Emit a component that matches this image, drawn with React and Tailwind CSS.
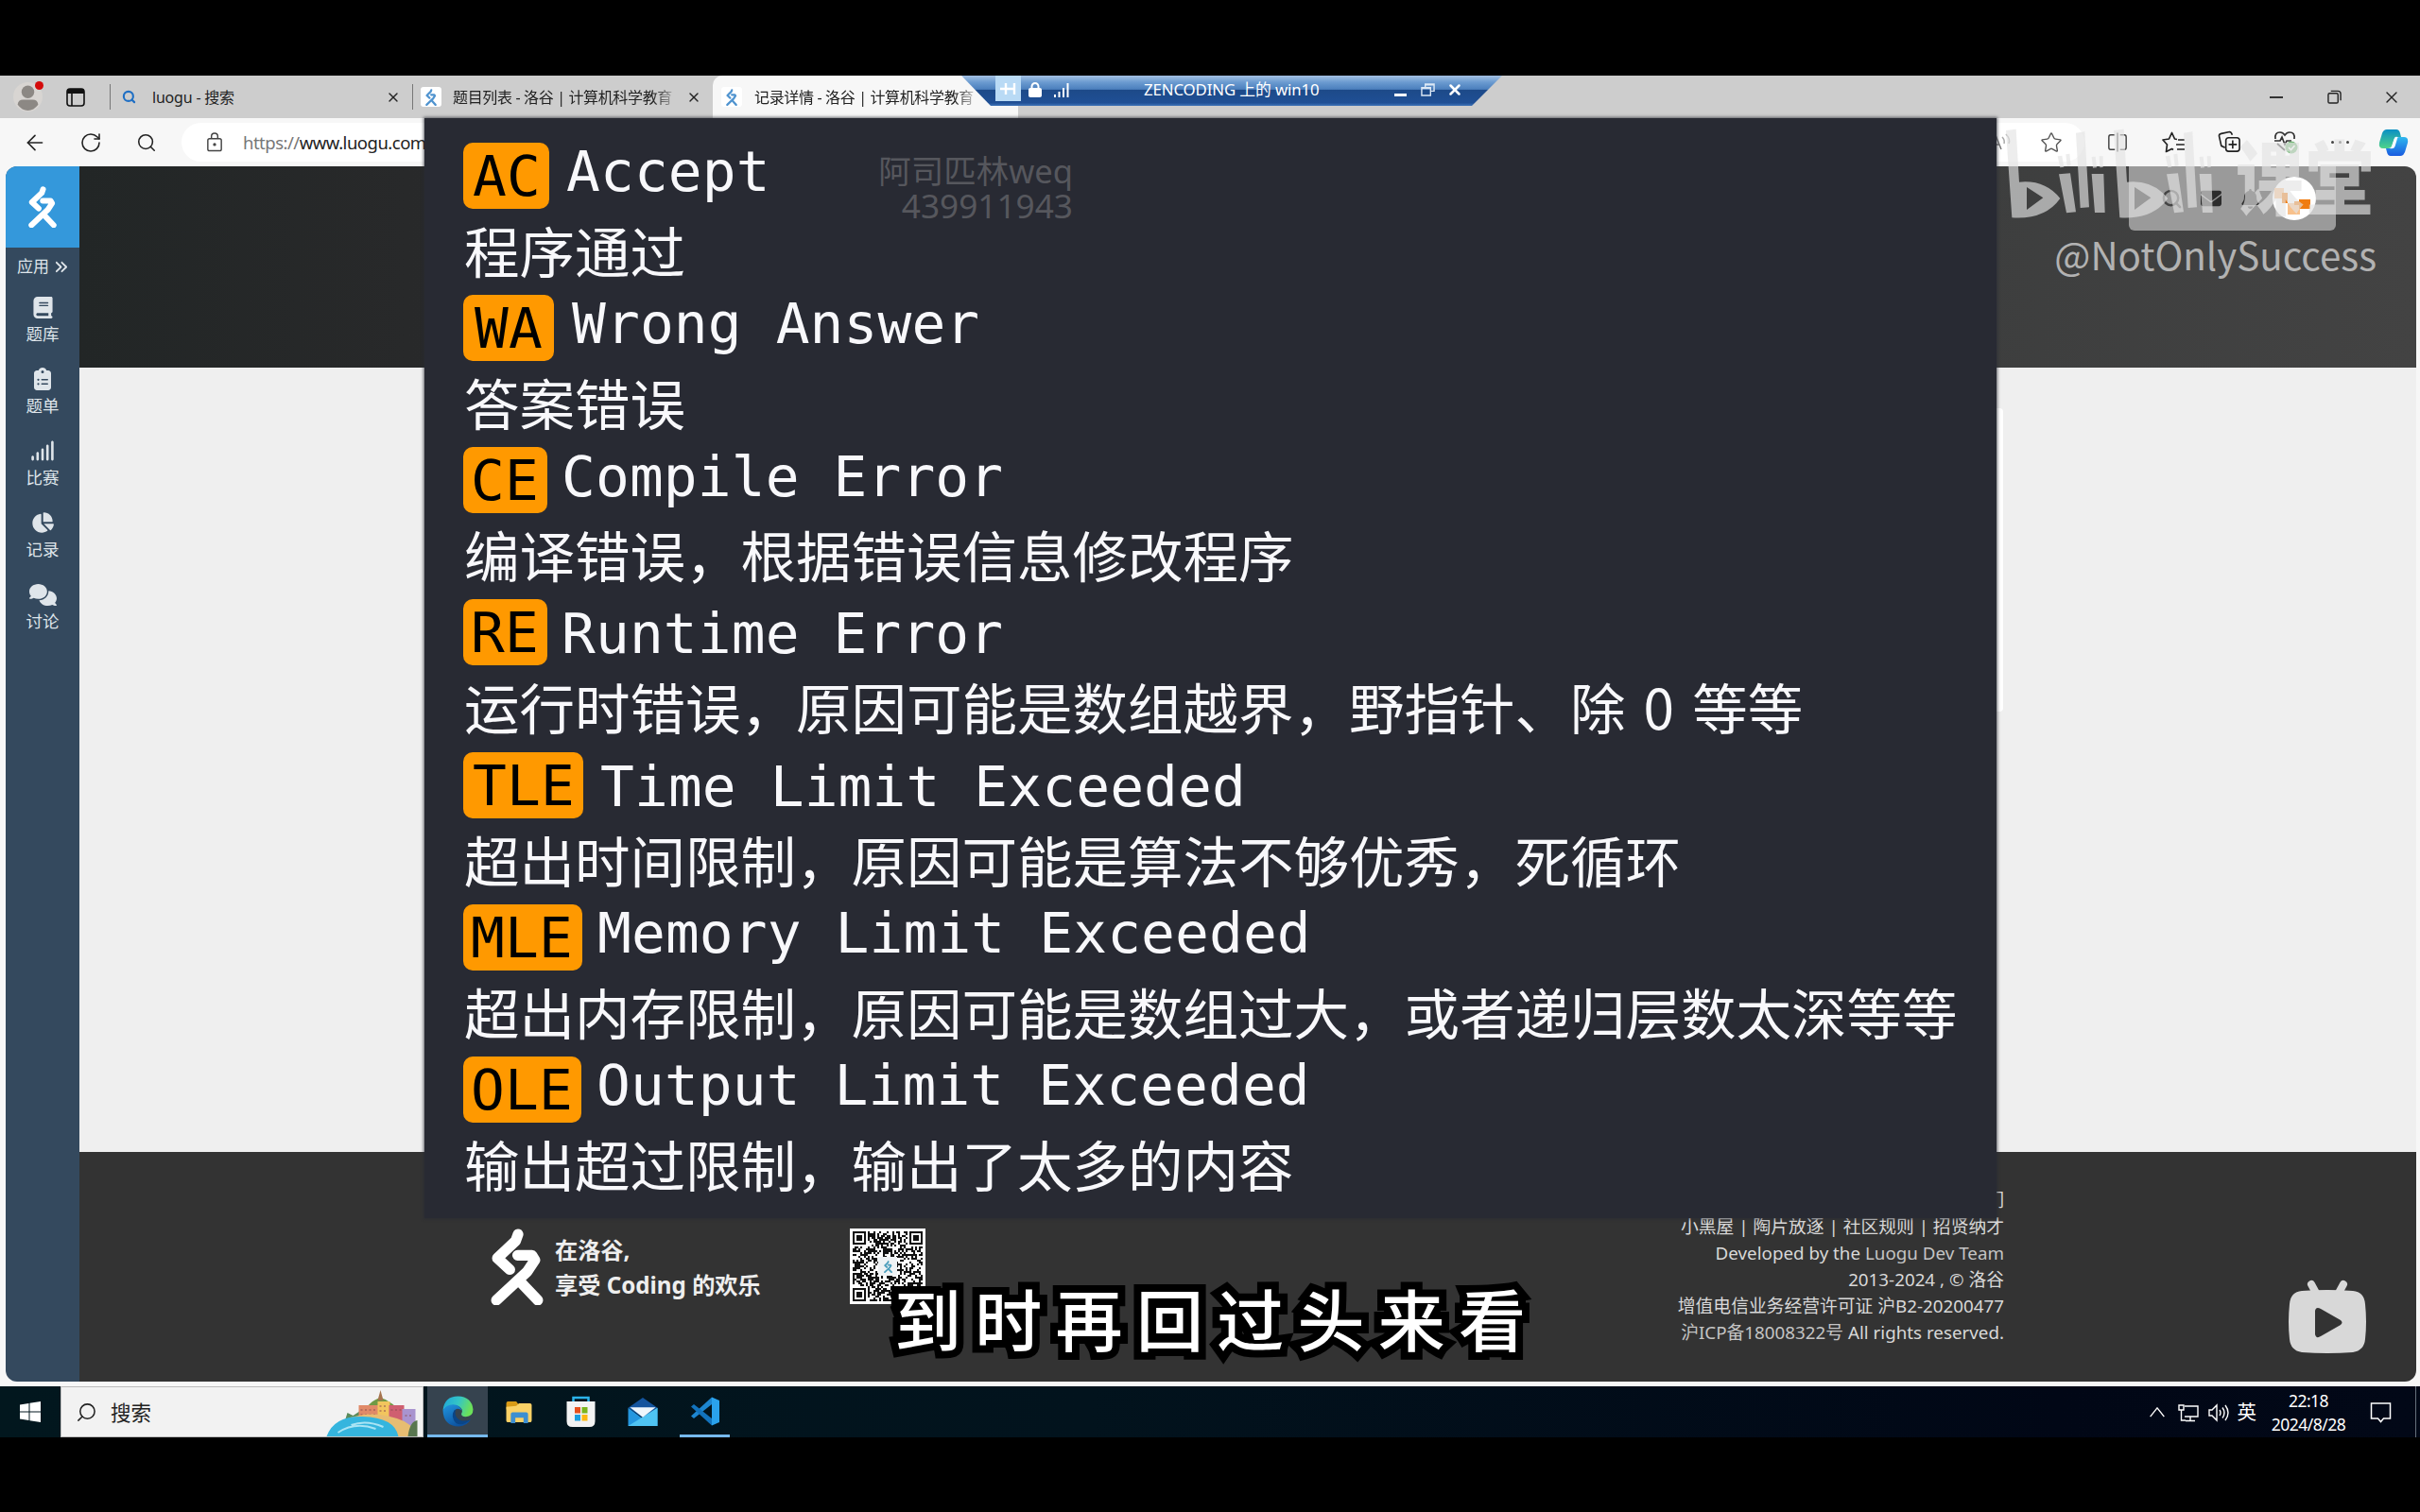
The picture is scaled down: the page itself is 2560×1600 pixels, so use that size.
import React from "react";
import { FaBook, FaClipboardList, FaSignal, FaChartPie, FaComments, FaBell, FaEnvelope, FaAnglesRight, FaLock } from "react-icons/fa6";
import { Search, Star, X, ArrowLeft, RotateCw } from "lucide-react";

const entries = [
  { code: "AC", title: "Accept", desc: "程序通过", badge: "w-[91px] pl-[10px]", head: "ml-[18px] -mt-[4px]" },
  { code: "WA", title: "Wrong Answer", desc: "答案错误", badge: "w-[96px] pl-[12px]", head: "ml-[19px] -mt-[4px]" },
  { code: "CE", title: "Compile Error", desc: "编译错误，根据错误信息修改程序", badge: "w-[89px] pl-[8px]", head: "ml-[15px] -mt-[3px]" },
  { code: "RE", title: "Runtime Error", desc: "运行时错误，原因可能是数组越界，野指针、除 0 等等", badge: "w-[89px] pl-[8px]", head: "ml-[15px] mt-[2px]" },
  { code: "TLE", title: "Time Limit Exceeded", desc: "超出时间限制，原因可能是算法不够优秀，死循环", badge: "w-[127px] pl-[10px]", head: "ml-[18px] mt-[2px]" },
  { code: "MLE", title: "Memory Limit Exceeded", desc: "超出内存限制，原因可能是数组过大，或者递归层数太深等等", badge: "w-[126px] pl-[8px]", head: "ml-[16px] -mt-[4px]" },
  { code: "OLE", title: "Output Limit Exceeded", desc: "输出超过限制，输出了太多的内容", badge: "w-[125px] pl-[8px]", head: "ml-[16px] -mt-[4px]" },
];

const nav = [
  { label: "题库", Icon: FaBook, size: 23 },
  { label: "题单", Icon: FaClipboardList, size: 24 },
  { label: "比赛", Icon: FaSignal, size: 26 },
  { label: "记录", Icon: FaChartPie, size: 24 },
  { label: "讨论", Icon: FaComments, size: 29 },
];

function Runner({ className, stroke = 11 }) {
  return (
    <svg viewBox="0 0 55 80" preserveAspectRatio="none" className={className} fill="none" stroke="currentColor" strokeWidth={stroke} strokeLinejoin="round" strokeLinecap="round">
      <path d="M28.5 6 L26 13 L7 31 L20 43" />
      <path d="M28 28 H43 L46 33 L38 45 L6 75" />
      <path d="M31 56 L49 75" />
    </svg>
  );
}

function QrCode() {
  const n = 37;
  const cells = [];
  let seed = 977;
  const finder = (x, y) => {
    const m = Math.max(Math.abs(x - 3), Math.abs(y - 3));
    return m === 3 || m <= 1;
  };
  for (let y = 0; y < n; y++) {
    for (let x = 0; x < n; x++) {
      seed = (seed * 1103515245 + 12345) % 2147483648;
      let on = (seed >> 12) % 100 < 54;
      if (x < 8 && y < 8) on = x < 7 && y < 7 && finder(x, y);
      else if (x >= n - 8 && y < 8) on = x > n - 8 && y < 7 && finder(x - n + 7, y);
      else if (x < 8 && y >= n - 8) on = x < 7 && y > n - 8 && finder(x, y - n + 7);
      if (on) cells.push(<rect key={x + "-" + y} x={x} y={y} width="1.03" height="1.03" />);
    }
  }
  return (
    <div className="relative flex h-[80px] w-[80px] items-center justify-center bg-white p-[3px]">
      <svg viewBox="0 0 37 37" className="h-full w-full" fill="#111">{cells}</svg>
      <div className="absolute flex h-[20px] w-[20px] items-center justify-center bg-[#eef2f4] text-[#4a9dbb]">
        <Runner className="h-[13px] w-[9px]" />
      </div>
    </div>
  );
}

function Favicon() {
  return (
    <div className="flex h-[21px] w-[22px] items-center justify-center rounded-[3px] bg-white text-[#4f93cf]">
      <Runner className="h-[18px] w-[12px]" stroke={10} />
    </div>
  );
}

function TabBar() {
  return (
    <div className="flex h-[45px] items-center bg-[#cdcdcd] text-[16px] text-[#222]">
      <div className="relative flex w-[58px] justify-center">
        <svg viewBox="0 0 30 30" className="h-[31px] w-[31px]">
          <circle cx="15" cy="15" r="15" fill="#d8d5d2" />
          <circle cx="15" cy="10" r="6.5" fill="#8c8884" />
          <path d="M4.5 23 Q5 18 10 18 H20 Q25 18 25.500 23 Q21 29 15 29 Q9 29 4.500 23Z" fill="#8c8884" />
        </svg>
        <div className="absolute -top-[1px] right-[12px] h-[9px] w-[9px] rounded-full bg-[#d40a0a]" />
      </div>
      <div className="flex w-[44px] justify-center">
        <svg viewBox="0 0 20 20" className="h-[20px] w-[20px]">
          <rect x="1" y="1" width="18" height="18" rx="3" fill="none" stroke="#111" strokeWidth="1.600" />
          <path d="M1 6V4Q1 1 4 1H16Q19 1 19 4V6Z" fill="#111" />
          <path d="M6 6V19" stroke="#111" strokeWidth="1.600" />
        </svg>
      </div>
      <div className="ml-[14px] h-[27px] w-[1px] bg-[#777]" />
      <div className="flex h-full w-[319px] items-center pl-[12px]">
        <Search size={15} strokeWidth={3.4} className="text-[#1f6fc4]" />
        <span className="ml-[17px] text-[16px] tracking-[-0.200px]">luogu - 搜索</span>
        <X size={16} strokeWidth={2} className="mr-[12px] ml-auto" />
      </div>
      <div className="h-[27px] w-[1px] bg-[#777]" />
      <div className="flex h-full w-[317px] items-center pl-[8px]">
        <Favicon />
        <span className="ml-[12px] w-[240px] overflow-hidden text-[16px] tracking-[-0.350px] whitespace-nowrap [mask-image:linear-gradient(90deg,black_88%,transparent)]">题目列表 - 洛谷 | 计算机科学教育</span>
        <X size={16} strokeWidth={2} className="ml-[7px]" />
      </div>
      <div className="flex h-full w-[323px] items-center rounded-t-[10px] bg-[#f7f7f7] pl-[9px]">
        <Favicon />
        <span className="ml-[13px] w-[240px] overflow-hidden text-[16px] tracking-[-0.350px] whitespace-nowrap [mask-image:linear-gradient(90deg,black_88%,transparent)]">记录详情 - 洛谷 | 计算机科学教育</span>
      </div>
      <div className="ml-auto flex items-center">
        <div className="h-[2px] w-[14px] bg-[#333]" />
        <svg viewBox="0 0 16 16" className="ml-[47px] h-[15px] w-[15px]" fill="none" stroke="#222" strokeWidth="1.500">
          <rect x="1" y="4" width="11" height="11" rx="1.500" />
          <path d="M4 1.500H12Q15 1.500 15 4.500V12" />
        </svg>
        <X size={20} strokeWidth={1.6} className="mr-[20px] ml-[43px]" />
      </div>
    </div>
  );
}

function ToolBar() {
  return (
    <div className="flex h-[51px] items-center bg-[#f7f7f7] text-[#222]">
      <ArrowLeft size={26} strokeWidth={1.5} className="ml-[24px]" />
      <RotateCw size={24} strokeWidth={1.6} className="ml-[34px]" />
      <Search size={22} strokeWidth={1.7} className="ml-[36px]" />
      <div className="ml-[26px] flex h-[41px] w-[2013px] items-center rounded-full bg-white">
        <div className="ml-[25px] flex w-[20px] justify-center">
          <svg viewBox="0 0 18 22" className="h-[21px] w-[18px]" fill="none" stroke="#444" strokeWidth="1.500">
            <rect x="1.500" y="7" width="15" height="13.500" rx="2" />
            <path d="M5.500 7V4.500Q5.500 1 9 1Q12.500 1 12.500 4.500V7" />
            <circle cx="9" cy="13.500" r="1" fill="#444" />
          </svg>
        </div>
        <span className="ml-[20px] text-[18.500px] tracking-[-0.500px] text-[#222]"><span className="text-[#777]">https://</span>www.luogu.com</span>
        <svg viewBox="0 0 26 22" className="ml-auto h-[22px] w-[26px]" fill="none" stroke="#777" strokeWidth="1.500">
          <path d="M1 18L7 3L13 18M3 13H11" />
          <path d="M14 5Q17 8 16 12M18 2Q23 7 21 12" stroke="#aaa" />
        </svg>
        <Star size={24} strokeWidth={1.4} className="mr-[23px] ml-[28px] text-[#555]" />
      </div>
      <svg viewBox="0 0 24 22" className="ml-[24px] h-[21px] w-[22px]" fill="none" stroke="#444" strokeWidth="1.600">
        <path d="M9 2.500H4Q2 2.500 2 5V17Q2 19.500 4 19.500H9M15 2.500H20Q22 2.500 22 5V17Q22 19.500 20 19.500H15M12 0V22" />
      </svg>
      <svg viewBox="0 0 26 24" className="ml-[36px] h-[24px] w-[26px]" fill="none" stroke="#222" strokeWidth="1.700" strokeLinejoin="round">
        <path d="M16 8.500L13.500 8L10.500 1.500L7.500 8L1 9L5.500 14L4.500 21.500L10.500 18.500L12 19.500M17 9H24M15 14H24M16 19H24" />
      </svg>
      <svg viewBox="0 0 26 26" className="ml-[33px] h-[25px] w-[25px]" fill="none" stroke="#222" strokeWidth="1.700">
        <path d="M8 19L4 17L1.500 6Q1.500 4 4 3.500L13 1.500Q15 1.500 16 5" />
        <rect x="9" y="8" width="15" height="15" rx="3" />
        <path d="M16.500 11V20M12 15.500H21" />
      </svg>
      <svg viewBox="0 0 28 26" className="ml-[33px] h-[26px] w-[28px]" fill="none" stroke="#333" strokeWidth="1.700">
        <path d="M3 9Q2 2 8 2Q11 2 13 5Q15 2 18 2Q24 2 23 9M2 11H8L10 7L13 15L15 11H20M5 14L13 21" />
        <circle cx="20" cy="18" r="6.500" fill="#78b97c" stroke="none" />
        <path d="M17 18L19.500 20.500L23.500 16" stroke="white" />
      </svg>
      <div className="ml-[34px] flex gap-[5px]">
        <div className="h-[3px] w-[3px] rounded-full bg-[#444]" /><div className="h-[3px] w-[3px] rounded-full bg-[#444]" /><div className="h-[3px] w-[3px] rounded-full bg-[#444]" />
      </div>
      <svg viewBox="0 0 32 30" className="ml-[31px] h-[32px] w-[32px]">
        <defs>
          <linearGradient id="cpA" x1="0" y1="0" x2="0" y2="1"><stop offset="0" stopColor="#0a8fc4" /><stop offset="1" stopColor="#4fd38a" /></linearGradient>
          <linearGradient id="cpB" x1="0" y1="0" x2="0" y2="1"><stop offset="0" stopColor="#2fb8ee" /><stop offset="1" stopColor="#1a5be0" /></linearGradient>
        </defs>
        <path d="M9 1H19Q22 1 23 5L24 9H20Q17 9 16 13L14 19Q13 21 10 21H5Q0 21 1 15L4 5Q5.500 1 9 1Z" fill="url(#cpA)" />
        <path d="M23 29H13Q10 29 9 25L8 21H12Q15 21 16 17L18 11Q19 9 22 9H27Q32 9 31 15L28 25Q26.500 29 23 29Z" fill="url(#cpB)" />
        <path d="M14 19L17 10Q18 8 20.500 9L17.500 19Q16.500 22 12 21Q13.500 21 14 19Z" fill="#f4fbff" />
      </svg>
    </div>
  );
}

function SideBar() {
  return (
    <div className="flex w-[78px] flex-col items-center overflow-hidden bg-[#34495e] text-[#dfe5ea]">
      <div className="flex h-[86px] w-full items-center justify-center bg-[#3498db] text-white">
        <Runner className="h-[44px] w-[30px]" />
      </div>
      <div className="mt-[7px] flex h-[26px] items-center text-[17px]">应用<FaAnglesRight size={15} className="ml-[5px]" /></div>
      <div className="mt-[14px] flex flex-col">
        {nav.map(({ label, Icon, size }) => (
          <div key={label} className="flex h-[76px] flex-col items-center">
            <div className="flex h-[32px] items-center"><Icon size={size} /></div>
            <span className="text-[17.500px] leading-[25px]">{label}</span>
          </div>
        ))}
      </div>
    </div>
  );
}

function HeaderTools() {
  return (
    <div className="mr-[85px] ml-auto flex h-[68px] w-[219px] items-center rounded-b-[6px] bg-[#9a9a9a] text-[#2c2c2c]">
      <Search size={23} strokeWidth={2.6} className="ml-[34px] text-[#444]" />
      <FaEnvelope size={22} className="ml-[19px]" />
      <FaBell size={21} className="ml-[20px]" />
      <svg viewBox="0 0 46 46" className="ml-[13px] h-[46px] w-[46px]">
        <circle cx="23" cy="23" r="23" fill="white" />
        <rect x="2" y="12" width="10" height="11" fill="#f8c18c" />
        <rect x="10" y="17" width="6" height="11" fill="#f07c10" />
        <rect x="16" y="28" width="13" height="12" fill="#f8c18c" />
        <rect x="28" y="24" width="12" height="10" fill="#f07c10" />
        <rect x="23" y="26" width="6" height="4" fill="#f07c10" />
      </svg>
    </div>
  );
}

function Footer() {
  return (
    <div className="flex h-[243px] bg-[#333333] text-[#d8d8d8]">
      <div className="mt-[81px] ml-[435px] flex w-[380px] text-white">
        <Runner className="h-[81px] w-[56px]" />
        <div className="ml-[12px] text-[24.200px] leading-[36.500px] font-bold whitespace-nowrap text-[#eee]">
          <div className="mt-[5px]">在洛谷,</div>
          <div>享受 Coding 的欢乐</div>
        </div>
      </div>
      <div className="mt-[81px]"><QrCode /></div>
      <div className="mt-[38px] mr-[436px] ml-auto text-right text-[18.800px] leading-[27.900px]">
        <div>们</div>
        <div>小黑屋 | 陶片放逐 | 社区规则 | 招贤纳才</div>
        <div>Developed by the <span className="text-[#c4c4c4]">Luogu Dev Team</span></div>
        <div>2013-2024 , © 洛谷</div>
        <div>增值电信业务经营许可证 沪B2-20200477</div>
        <div><span className="text-[#c4c4c4]">沪ICP备18008322号</span> All rights reserved.</div>
      </div>
    </div>
  );
}

function TaskBar() {
  return (
    <div className="flex h-[54px] items-stretch bg-[linear-gradient(90deg,#02171e,#02131d_45%,#010716_85%,#020817)] text-white">
      <div className="flex w-[64px] items-center justify-center">
        <svg viewBox="0 0 22 22" className="h-[22px] w-[22px]" fill="white"><path d="M0 3.500L9.500 2V10.500H0ZM10.500 1.800L22 0V10.500H10.500ZM0 11.500H9.500V20L0 18.500ZM10.500 11.500H22V22L10.500 20.200Z" /></svg>
      </div>
      <div className="flex w-[384px] items-center border border-[#bbb] bg-[#f2f2f2] text-[#222]">
        <Search size={23} strokeWidth={1.6} className="ml-[15px] -scale-x-100" />
        <span className="mt-[2px] ml-[14px] text-[21.500px]">搜索</span>
        <svg viewBox="0 0 100 50" className="mt-auto ml-auto h-[50px] w-[103px]">
          <path d="M35 30Q45 12 57 9Q70 12 82 30Z" fill="#6f9a45" />
          <path d="M54 12L57 1L60 12Z" fill="#a5744d" />
          <path d="M18 38L22 25L28 28L40 20V40Z" fill="#5a8b5c" />
          <rect x="34" y="17" width="22" height="16" fill="#e08a68" />
          <rect x="54" y="13" width="13" height="20" fill="#f2c55e" />
          <rect x="66" y="17" width="16" height="18" fill="#cf5f70" />
          <rect x="80" y="21" width="14" height="27" fill="#a994cf" />
          <path d="M36 22H53M36 27H53M56 18H65M56 23H65M68 22H80M83 28H92" stroke="#8e4f50" strokeWidth="1.200" strokeDasharray="2 2.500" />
          <path d="M20 32Q50 20 82 34Q96 42 95 50H60Z" fill="#e7bd72" />
          <path d="M0 50Q8 28 38 29Q72 30 76 50Z" fill="#35b5de" />
          <path d="M12 46Q30 34 52 42M26 38Q42 32 60 40" stroke="#a9e4f4" strokeWidth="2" fill="none" />
          <path d="M86 50Q88 34 96 33V50Z" fill="#59764f" />
        </svg>
      </div>
      <div className="ml-[4px] flex w-[64px] items-center justify-center border-b-[3px] border-[#76b9ed] bg-[#36434f]">
        <svg viewBox="0 0 32 32" className="mt-[2px] h-[33px] w-[33px]">
          <defs>
            <linearGradient id="edA" x1="0" y1="0" x2="1" y2="0.300"><stop offset="0" stopColor="#1ba4dc" /><stop offset="0.550" stopColor="#35c5c5" /><stop offset="1" stopColor="#6be05a" /></linearGradient>
            <linearGradient id="edB" x1="0" y1="0" x2="0.600" y2="1"><stop offset="0" stopColor="#2196e0" /><stop offset="1" stopColor="#0c4f9c" /></linearGradient>
          </defs>
          <path d="M0.500 15Q2 0.500 16 0.500Q30 1 31.500 14Q31.500 21 24 21.500Q19 21.500 19.500 18.500Q22 14 17 11Q8 7 0.500 15Z" fill="url(#edA)" />
          <path d="M0.500 15Q4 9 11 9Q18 9.500 20 15Q14 11 11.500 17Q10 25 18 27Q24 28 29 24.500Q25 31 17 31.500Q1 31 0.500 15Z" fill="url(#edB)" />
          <path d="M12 15Q8 22 14 28Q20 32 29 24.500Q19 28 14.500 22Q12 18 14 14Z" fill="#0a4587" />
        </svg>
      </div>
      <div className="flex w-[66px] items-center justify-center">
        <svg viewBox="0 0 30 26" className="h-[25px] w-[30px]">
          <path d="M1 3Q1 1 3 1H12L15 5V10H1Z" fill="#d99a16" />
          <path d="M1 7L12 6L15 3H27Q29 3 29 5V22Q29 24 27 24H3Q1 24 1 22Z" fill="#fbd166" />
          <path d="M6 25V15Q6 13 8 13H23Q25 13 25 15V25H20V19H11V25Z" fill="#3d8fd1" />
        </svg>
      </div>
      <div className="flex w-[65px] items-center justify-center">
        <svg viewBox="0 0 32 34" className="h-[34px] w-[33px]">
          <path d="M8 7V2H24V7" fill="none" stroke="#2bb3ea" strokeWidth="2.500" />
          <path d="M1 6H31V27Q31 33 25 33H7Q1 33 1 27Z" fill="#f3f3f3" />
          <rect x="9.500" y="12" width="6" height="6.500" fill="#e8501c" /><rect x="17" y="12" width="6" height="6.500" fill="#7ab51d" />
          <rect x="9.500" y="20" width="6" height="6.500" fill="#1c9fe0" /><rect x="17" y="20" width="6" height="6.500" fill="#fbb812" />
        </svg>
      </div>
      <div className="flex w-[65px] items-center justify-center">
        <svg viewBox="0 0 34 32" className="h-[31px] w-[34px]">
          <path d="M1 11L17 0L33 11L17 22Z" fill="#14549e" />
          <path d="M1 11L17 23L33 11V31H1Z" fill="#2496df" />
          <path d="M33 11L1 31H33Z" fill="#4fc3f2" />
          <path d="M3 10.500H31L17 21.500Z" fill="#eef6fc" />
        </svg>
      </div>
      <div className="ml-[7px] flex w-[53px] items-center justify-center border-b-[3px] border-[#76b9ed]">
        <svg viewBox="0 0 32 32" className="mt-[2px] h-[33px] w-[32px]">
          <path d="M23 8.500L4 23.500L1 21L23 1Z" fill="#1d86d0" />
          <path d="M23 23.500L4 8.500L1 11L23 31Z" fill="#1273bd" />
          <path d="M23 1L31 4.500V27.500L23 31Z" fill="#2aa2ec" />
        </svg>
      </div>
      <div className="mr-[25px] ml-auto flex items-center pt-[1px]">
        <svg viewBox="0 0 18 12" className="h-[11px] w-[18px]" fill="none" stroke="white" strokeWidth="1.500"><path d="M1 11L9 1L17 11" /></svg>
        <svg viewBox="0 0 22 20" className="ml-[13px] h-[20px] w-[22px]" fill="none" stroke="white" strokeWidth="1.400"><path d="M7 3H21V14H7M13 14V18M8 18.500H18M1 2H6V7H1ZM3.500 7V18H8" /></svg>
        <svg viewBox="0 0 24 20" className="ml-[10px] h-[20px] w-[24px]" fill="none" stroke="white" strokeWidth="1.400"><path d="M1 7H4L9 2V18L4 13H1ZM12 7Q14 10 12 13M15 4.500Q19 10 15 15.500M18 2Q24 10 18 18" /></svg>
        <span className="ml-[7px] text-[20.500px]">英</span>
        <div className="ml-[14px] w-[82px] text-center text-[17.500px] leading-[25px] tracking-[-0.500px] whitespace-nowrap"><div>22:18</div><div>2024/8/28</div></div>
        <svg viewBox="0 0 22 22" className="ml-[24px] h-[22px] w-[23px]" fill="none" stroke="white" strokeWidth="1.500"><path d="M1 1H21V17H14L11 20.500L8 17H1Z" /></svg>
      </div>
      <div className="mr-[4px] w-[1px] bg-[#66707c]" />
    </div>
  );
}

function RemoteBar() {
  return (
    <div className="absolute top-[80px] left-[1017px] flex h-[32px] w-[572px] items-center bg-[linear-gradient(180deg,#a3c0e2_0%,#6b9bd0_22%,#4b7fbd_45%,#1d4a89_48%,#1f4f95_90%,#3e74b8_100%)] text-white [clip-path:polygon(0_0,100%_0,540px_100%,31px_100%)]">
      <div className="-mt-[5px] ml-[36px] flex h-[27px] w-[27px] items-center justify-center bg-[#b9daf5]">
        <svg viewBox="0 0 18 14" className="h-[14px] w-[18px]" fill="none" stroke="white" strokeWidth="2.400"><path d="M0 7H6M6 1V13M6 7H15M15 1V13" /></svg>
      </div>
      <FaLock size={16} className="-mt-[3px] ml-[7px]" />
      <svg viewBox="0 0 16 15" className="-mt-[2px] ml-[12px] h-[15px] w-[16px]" fill="white"><path d="M0 12H2V15H0ZM4.500 9H6.500V15H4.500ZM9 5H11V15H9ZM13.500 0H15.500V15H13.500Z" /></svg>
      <span className="-mt-[2px] ml-[79px] w-[186px] text-[16.800px] tracking-[-0.100px] whitespace-nowrap">ZENCODING 上的 win10</span>
      <div className="mt-[8px] ml-[79px] h-[3px] w-[13px] bg-white" />
      <svg viewBox="0 0 16 16" className="-mt-[3px] ml-[15px] h-[15px] w-[15px]" fill="none" stroke="#dce8f5" strokeWidth="1.500"><path d="M5 6V2H15V10H11M1 6H11V15H1ZM5 3H15M1 7H11" /></svg>
      <X size={18} strokeWidth={3.4} className="-mt-[3px] ml-[12px]" />
    </div>
  );
}

function StatusPanel() {
  return (
    <div className="absolute top-[125px] left-[449px] h-[1164px] w-[1663px] bg-[#282a33] pt-[26px] pl-[41px] shadow-[0_0_3px_1px_rgba(40,42,51,0.7)]">
      {entries.map((e) => (
        <div key={e.code} className="h-[161.150px]">
          <div className="flex h-[70px] items-start font-['DejaVu_Sans_Mono',monospace] text-[59.500px] leading-[70px] tracking-[0.120px] whitespace-pre">
            <div className={"h-[70px] shrink-0 rounded-[10px] bg-[#ff9900] pt-[1px] text-black " + e.badge}>{e.code}</div>
            <div className={"text-[#f8f8fb] " + e.head}>{e.title}</div>
          </div>
          <div className="pl-[1px] font-['Noto_Sans_CJK_SC',sans-serif] text-[58.500px] leading-[86px] whitespace-nowrap text-[#f8f8fb] [word-spacing:6px]">{e.desc}</div>
        </div>
      ))}
    </div>
  );
}

function LogoUnit({ shift }) {
  return (
    <g transform={"translate(" + shift + " 0)"}>
      <path fillRule="evenodd" d="M36 24L68 20L78 188Q160 180 208 240Q160 308 55 301ZM102 204V276L154 238Z" />
      <path d="M204 163L240 160L258 283L228 286ZM258 32L286 28L300 268L272 270ZM308 162L346 162L350 285L318 285Z" />
      <path d="M200 106L214 104L220 140L208 142ZM226 100L238 98L242 136L230 138ZM308 108L320 107L324 142L312 143ZM332 106L344 106L344 141L334 142Z" />
    </g>
  );
}

function BrandMark() {
  return (
    <div className="absolute top-[130px] left-[2110px] h-[180px] w-[410px]">
      <div className="flex h-[104px] items-start text-[#e4e4e4]/65">
        <svg viewBox="0 0 765 312" className="h-[104px] w-[255px] shrink-0" fill="currentColor">
          <LogoUnit shift={0} />
          <LogoUnit shift={342} />
        </svg>
        <span className="mt-[13px] origin-top-left scale-y-[1.180] text-[72px] leading-[76px] font-black tracking-[2px]">课堂</span>
      </div>
      <div className="mr-[6px] text-right font-['Noto_Sans_CJK_SC',sans-serif] text-[40.300px] leading-[70px] whitespace-nowrap text-[#b2b2b2]">@NotOnlySuccess</div>
    </div>
  );
}

export default function App() {
  return (
    <div className="relative h-[1600px] w-[2560px] overflow-hidden bg-black pt-[80px] font-['Noto_Sans','Noto_Sans_CJK_SC',sans-serif]">
      <TabBar />
      <ToolBar />
      <div className="h-[1291px] bg-[#f7f7f7] pr-[4px] pb-[5px] pl-[6px]">
        <div className="flex h-[1286px] overflow-hidden rounded-[12px]">
          <SideBar />
          <div className="flex flex-1 flex-col">
            <div className="flex h-[213px] items-start bg-[linear-gradient(90deg,#222626,#28292a_14%,#3d3e3e_80%,#434343)]">
              <HeaderTools />
            </div>
            <div className="h-[830px] bg-[#efefef]">
              <div className="h-[43px]" />
              <div className="ml-[435px] h-[321px] w-[1600px] rounded-[4px] bg-white" />
            </div>
            <Footer />
          </div>
        </div>
      </div>
      <TaskBar />
      <RemoteBar />
      <StatusPanel />
      <div className="absolute top-[162px] left-[835px] w-[300px] text-right text-[#56575d]">
        <div className="text-[34.500px] leading-[37px]">阿司匹林weq</div>
        <div className="text-[35.200px] leading-[37px]">439911943</div>
      </div>
      <BrandMark />
      <div className="absolute top-[1342px] left-[946px] font-['Noto_Sans_CJK_SC',sans-serif] text-[71px] leading-[102px] font-medium tracking-[14.300px] whitespace-nowrap text-white [-webkit-text-stroke:16px_black] [paint-order:stroke_fill] [stroke-linejoin:round]">到时再回过头来看</div>
      <svg viewBox="0 0 82 78" className="absolute top-[1354px] left-[2421px] h-[78px] w-[82px]">
        <path d="M24 5L30 16M58 5L52 16" stroke="#d8d8d8" strokeWidth="8" strokeLinecap="round" />
        <path d="M14 12Q41 10 68 12Q80 13 81 26Q83 45 81 63Q80 75 68 77Q41 79 14 77Q2 75 1 63Q-1 45 1 26Q2 13 14 12Z" fill="#d8d8d8" />
        <path d="M28 33Q29 28 34 31L55 43Q58 45.500 55 48L34 60Q29 63 28 58Z" fill="#333" />
      </svg>
    </div>
  );
}
